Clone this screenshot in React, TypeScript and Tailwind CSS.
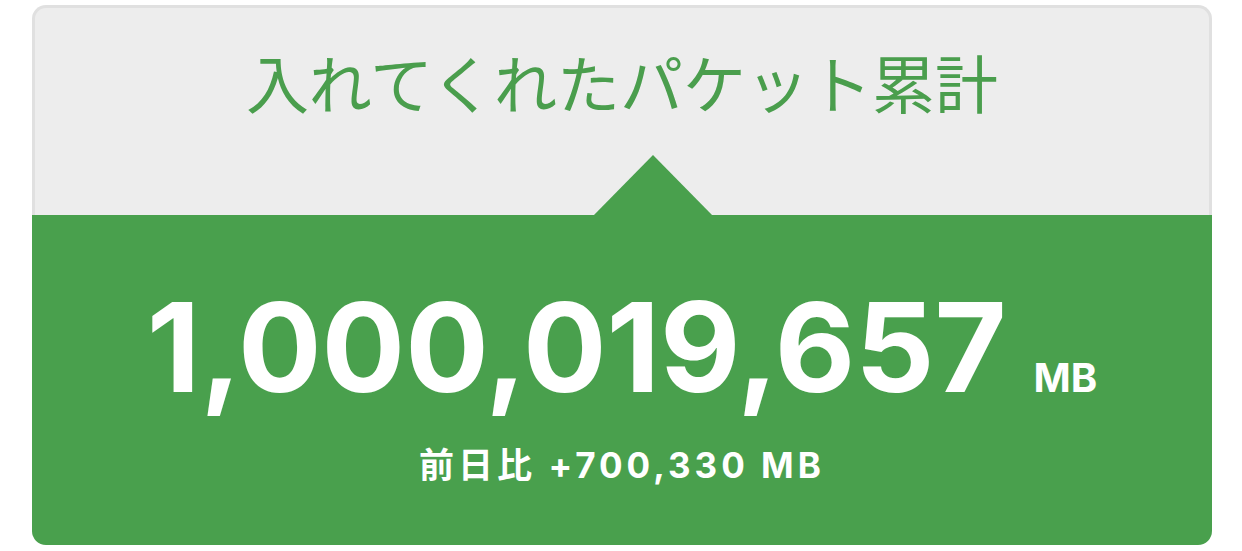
import React from "react";

export default function App() {
  return (
    <div className="w-[1242px] h-[551px] bg-white pt-[5px] pl-[32px]">
      <div className="relative w-[1180px]">
        <div className="h-[210px] bg-[#ededed] border-[3px] border-b-0 border-[#e0e0e0] rounded-t-[14px] flex justify-center">
          <div
            className="mt-[41px] text-[63px] leading-none text-[#4a9e4d]"
            style={{ fontFamily: '"Noto Sans CJK JP", "Noto Sans", sans-serif', fontWeight: 400 }}
          >
            入れてくれたパケット累計
          </div>
        </div>
        <svg
          className="absolute left-[561px] top-[150px]"
          width="120"
          height="61"
          viewBox="0 0 120 61"
        >
          <polygon points="0,61 60,0 120,61" fill="#49a04d" />
        </svg>
        <div className="h-[330px] bg-[#49a04d] rounded-b-[14px] flex flex-col items-center text-white">
          <div
            className="mt-[70px] flex items-baseline"
            style={{ fontFamily: 'Inter, "Noto Sans CJK JP", sans-serif' }}
          >
            <span className="text-[124px] leading-none font-bold">1,000,019,657</span>
            <span className="ml-[27px] text-[40px] leading-none font-bold">MB</span>
          </div>
          <div
            className="mt-[39px] text-[35px] leading-none font-bold tracking-[4px]"
            style={{ fontFamily: 'Inter, "Noto Sans CJK JP", sans-serif' }}
          >
            前日比 +700,330 MB
          </div>
        </div>
      </div>
    </div>
  );
}
